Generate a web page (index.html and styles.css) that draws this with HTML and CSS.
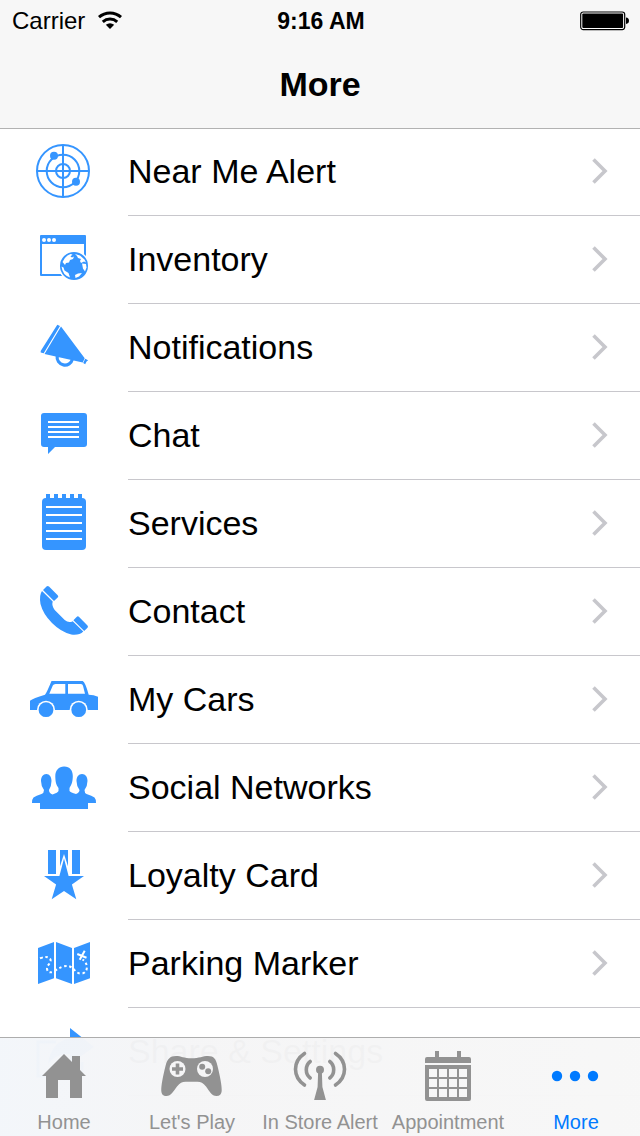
FILE: index.html
```html
<!DOCTYPE html>
<html lang="en">
<head>
<meta charset="utf-8">
<meta name="viewport" content="width=device-width, initial-scale=1">
<title>More</title>
<link rel="stylesheet" href="styles.css">
</head>
<body>
<svg class="defs" aria-hidden="true">
  <symbol id="chevron" viewBox="0 0 20 32"><path d="M3.500 4.500L15 16 3.500 27.500" fill="none" stroke="#c7c7cc" stroke-width="3.600"/></symbol>
</svg>
<div class="app">
  <header class="header">
    <div class="status">
      <div class="status-left">
        <span>Carrier</span>
        <svg width="26" height="20" viewBox="0 0 26 20" aria-hidden="true">
          <g fill="none" stroke="#000" stroke-width="3"><path d="M2 6.200a16.500 16.500 0 0 1 22 0"/><path d="M5.800 10.800a10.800 10.800 0 0 1 14.400 0"/></g>
          <path d="M8.800 13.800a6.800 6.800 0 0 1 8.400 0L13 18z"/>
        </svg>
      </div>
      <time class="status-time">9:16 AM</time>
      <svg class="battery" width="50" height="20" viewBox="0 0 50 20" aria-label="Battery full">
        <rect x=".7" y="1" width="44" height="17.600" rx="2.500" fill="#fff" stroke="#000" stroke-width="1.200"/>
        <rect x="2.300" y="2.600" width="40.800" height="14.400" rx="1"/>
        <path d="M46 6.600q3 .4 3 3.200t-3 3.200z"/>
      </svg>
    </div>
    <h1 class="title">More</h1>
  </header>

  <main class="list">
    <a class="row" href="#near-me">
      <svg class="icon" viewBox="0 0 72 88" aria-hidden="true">
        <g fill="none" stroke="currentColor" stroke-width="2"><circle cx="35" cy="43" r="26"/><circle cx="35" cy="43" r="16.300"/><circle cx="35" cy="43" r="7"/><path d="M35 17v52M9 43h52"/></g>
        <circle cx="26" cy="27.700" r="4"/><circle cx="48" cy="53.800" r="4"/>
      </svg>
      <span class="body"><span class="label">Near Me Alert</span><svg class="chevron"><use href="#chevron"/></svg></span>
    </a>
    <a class="row" href="#inventory">
      <svg class="icon" viewBox="0 0 72 88" aria-hidden="true">
        <path fill-rule="evenodd" d="M13 19h44a1 1 0 0 1 1 1v39a1 1 0 0 1-1 1H13a1 1 0 0 1-1-1V20a1 1 0 0 1 1-1zM14 28v30h42V28z"/>
        <g fill="#fff"><circle cx="16" cy="24" r="2"/><circle cx="21" cy="24" r="2"/><circle cx="26" cy="24" r="2"/><circle cx="46" cy="50" r="15.500"/></g>
        <circle cx="46" cy="50" r="14"/>
        <g fill="#fff"><path d="M34.500 46q1.500-4 5-6.500l3-1.500 2 .5-2 2 1.500 1 2-1-1 2.500-3 1-1 2.500-3 .5-1 2z"/><path d="M47 38l5 1.500 4.500 4 1.500 3-2-1-3 1.500-1-2 1-2-3-1-1-2z"/><path d="M54 47.500l4 .5.500 3.500-1.500 4-2-3z"/><path d="M33.500 50.500l2 1 1 3 4 2.500 1.500 4.500q-7.500-2.500-8.500-11z"/><path d="M47 59l3-1.500 4-.5-3 3.500-3.500 1.500z"/></g>
      </svg>
      <span class="body"><span class="label">Inventory</span><svg class="chevron"><use href="#chevron"/></svg></span>
    </a>
    <a class="row" href="#notifications">
      <svg class="icon" viewBox="0 0 72 88" aria-hidden="true">
        <path d="M29.300 20.700L32 22 15.700 49.300 12.700 48.500V47zM33 22.600L56.700 54.200l-2 4.400-38.200-8.700zM57.200 54.800l2.900 1.500-1.700 1.500-1.200 2.500-2-1.200z"/>
        <path d="M29.200 52a7.800 7.800 0 0 0 15.300 3" fill="none" stroke="currentColor" stroke-width="3.200"/>
      </svg>
      <span class="body"><span class="label">Notifications</span><svg class="chevron"><use href="#chevron"/></svg></span>
    </a>
    <a class="row" href="#chat">
      <svg class="icon" viewBox="0 0 72 88" aria-hidden="true">
        <path d="M16 21h40a3 3 0 0 1 3 3v28a3 3 0 0 1-3 3H27l-7 7v-7h-4a3 3 0 0 1-3-3V24a3 3 0 0 1 3-3z"/>
        <path d="M20 30h31M20 35h31M20 40h31M20 45h31" stroke="#fff" stroke-width="2"/>
      </svg>
      <span class="body"><span class="label">Chat</span><svg class="chevron"><use href="#chevron"/></svg></span>
    </a>
    <a class="row" href="#services">
      <svg class="icon" viewBox="0 0 72 88" aria-hidden="true">
        <rect x="14" y="18" width="44" height="52" rx="4"/>
        <path d="M18 14h4v5h-4zM26 14h4v5h-4zM34 14h4v5h-4zM42 14h4v5h-4zM50 14h4v5h-4z"/>
        <path d="M18 27h36M18 35h36M18 43h36M18 51h36M18 59h36" stroke="#fff" stroke-width="2"/>
      </svg>
      <span class="body"><span class="label">Services</span><svg class="chevron"><use href="#chevron"/></svg></span>
    </a>
    <a class="row" href="#contact">
      <svg class="icon" viewBox="0 0 72 88" aria-hidden="true">
        <path d="M14 23l10.700 10.500q-1.200 4 2 8.500l10 10q4 3.500 8 1.200L55.300 63.500q-4 4-12 3Q33 64 24 55T12.500 36q-1.500-9 1.500-13z"/>
        <path d="M15 22l3.500-3.500q1.200-1 2.500 0l8.700 8.700q1.200 1.200 0 2.400L26 33zM45.400 52.200l3.200-3.300q1.300-1.200 2.500 0l8.400 8.600q1 1.200 0 2.300L56.200 63z"/>
      </svg>
      <span class="body"><span class="label">Contact</span><svg class="chevron"><use href="#chevron"/></svg></span>
    </a>
    <a class="row" href="#cars">
      <svg class="icon" viewBox="0 0 72 88" aria-hidden="true">
        <path fill-rule="evenodd" d="M2 54V44.700q3-2.400 15-6 1.500-1.500 6.500-13.700h31.200q2.500 1 6 13.700 5 0 9.300 2V54zM21.300 37.700h16V28H27.500q-2 0-2.700 1.500zM40 37.700h17l-2-8q-.5-1.700-2-1.700H40z"/>
        <g fill="#fff"><circle cx="18" cy="53.700" r="9"/><circle cx="50.700" cy="53.700" r="9"/></g>
        <circle cx="18" cy="53.700" r="7.400"/><circle cx="50.700" cy="53.700" r="7.400"/>
      </svg>
      <span class="body"><span class="label">My Cars</span><svg class="chevron"><use href="#chevron"/></svg></span>
    </a>
    <a class="row" href="#social">
      <svg class="icon" viewBox="0 0 72 88" aria-hidden="true">
        <path d="M36.300 22.500c5.500 0 8.500 4 8.500 9.500 0 6-1.500 9-3.300 12v3q1 1.500 6.500 3 3.500-1.500 3.500-4-3-4-3-9c0-4 2-7 5.500-7s5.500 3 5.500 7q0 5-3 9 0 3 2 4 5.500 1.500 8 3.500 1.500 1.500 1.500 5.500h-8v6H12v-6H4q0-4 1.500-5.500 2.500-2 8-3.500 2.500-1 2.500-4-3-4-3-9c0-4 2-7 5.300-7s5.200 3 5.200 7q0 5-2.500 9 0 3 3.500 4.500 5.500-2 6-3.500v-3c-2.200-3-3.200-6-3.200-12 0-5.500 3.500-9.500 8.700-9.500z"/>
      </svg>
      <span class="body"><span class="label">Social Networks</span><svg class="chevron"><use href="#chevron"/></svg></span>
    </a>
    <a class="row" href="#loyalty">
      <svg class="icon" viewBox="0 0 72 88" aria-hidden="true">
        <path d="M20 18h8v24h-8zM32 18h8v24h-8zM44 18h8v24h-8z"/>
        <path d="M36 22l6.500 20h-13z" fill="#fff"/>
        <path d="M36 26.500l4.600 17.500H56L43.900 52.500 48.300 67.300 36 59 23.700 67.300l4.400-14.800L16 44h15.400z"/>
      </svg>
      <span class="body"><span class="label">Loyalty Card</span><svg class="chevron"><use href="#chevron"/></svg></span>
    </a>
    <a class="row" href="#parking">
      <svg class="icon" viewBox="0 0 72 88" aria-hidden="true">
        <path d="M10 28l16-6v36.300L10 64zM28 22l16 6v36l-16-5.700zM46 28l16-6v36.300L46 64z"/>
        <path d="M12 38.300q8-3.200 10.500 1.200c1 4-3.500 5-3.500 9.500q1 5 7 2.500 8-6 14-5.500c6 1 7 7.500 13.500 7.700 7-.7 7-10.700 1-14.200" fill="none" stroke="#fff" stroke-width="2" stroke-dasharray="2.600 2.600"/>
        <path d="M49.300 34l9.200 3.700M56.700 30.700l-5 9" stroke="#fff" stroke-width="2"/>
      </svg>
      <span class="body"><span class="label">Parking Marker</span><svg class="chevron"><use href="#chevron"/></svg></span>
    </a>
    <a class="row" href="#share">
      <svg class="icon" viewBox="0 0 72 88" aria-hidden="true">
        <path d="M42 20l24 19-24 17V46q-14-1-22 10 3-22 22-26z"/>
        <path d="M28 34H10v34h44V54" fill="none" stroke="currentColor" stroke-width="3"/>
      </svg>
      <span class="body"><span class="label">Share &amp; Settings</span></span>
    </a>
  </main>

  <nav class="tabs">
    <a class="tab" href="#home">
      <svg class="tab-icon" viewBox="0 0 72 68" aria-hidden="true"><path d="M36 16l8 8v-6h8v14l6 6h-4v22H42V42H30v18H18V38h-4z"/></svg>
      <span class="tab-label">Home</span>
    </a>
    <a class="tab" href="#play">
      <svg class="tab-icon" viewBox="0 0 72 68" aria-hidden="true">
        <path d="M20 18c5 0 8 2.300 15.500 2.300S47 18 52 18c6 0 8 3 9.500 10 2.500 10 4.500 20 4.200 25-.2 3-2 5-5.200 5-5 0-7-5-10.500-9.500-3-3.500-5-4.700-8.500-4.700h-12c-3.500 0-5.500 1.200-8.500 4.700C17.500 53 15 58 10.500 58 7 58 5.500 56 5.300 53c-.3-5 1.700-15 4.200-25C11.200 21 14 18 20 18z"/>
        <g fill="#f5f5f6"><circle cx="21.500" cy="31" r="8"/><circle cx="49" cy="31" r="8"/></g>
        <path d="M19.700 25.500h3.600v3.700H27v3.600h-3.700v3.700h-3.600v-3.700H16v-3.600h3.700z"/><circle cx="46.200" cy="28.800" r="3"/><circle cx="52.200" cy="33.200" r="3"/>
      </svg>
      <span class="tab-label">Let's Play</span>
    </a>
    <a class="tab" href="#store">
      <svg class="tab-icon" viewBox="0 0 72 68" aria-hidden="true">
        <circle cx="36" cy="31.700" r="4"/><path d="M34.200 32h3.600l.6 17 3.500 13H30.100l3.500-13z"/>
        <g fill="none" stroke="currentColor" stroke-width="3.600" stroke-linecap="round"><path d="M26.200 23.500c-5.200 4-5.200 12.500 0 16.500M45.800 23.500c5.200 4 5.200 12.500 0 16.500M20.500 15.500c-12 8-12 23.500 0 31.500M51.500 15.500c12 8 12 23.500 0 31.500"/></g>
      </svg>
      <span class="tab-label">In Store Alert</span>
    </a>
    <a class="tab" href="#appointment">
      <svg class="tab-icon" viewBox="0 0 72 68" aria-hidden="true">
        <path d="M13 25v-4q0-2 2-2h8v-6h4v6h18v-6h4v6h8q2 0 2 2v4z"/>
        <path fill-rule="evenodd" d="M13 27h46v34q0 2-2 2H15q-2 0-2-2zM17 31v8h8v-8zM27 31v8h8v-8zM37 31v8h8v-8zM47 31v8h8v-8zM17 41v8h8v-8zM27 41v8h8v-8zM37 41v8h8v-8zM47 41v8h8v-8zM17 51v8h8v-8zM27 51v8h8v-8zM37 51v8h8v-8zM47 51v8h8v-8z"/>
      </svg>
      <span class="tab-label">Appointment</span>
    </a>
    <a class="tab tab-active" href="#more" aria-current="page">
      <svg class="tab-icon" viewBox="0 0 72 68" aria-hidden="true"><circle cx="17" cy="38" r="5.200"/><circle cx="35" cy="38" r="5.200"/><circle cx="53" cy="38" r="5.200"/></svg>
      <span class="tab-label">More</span>
    </a>
  </nav>
</div>
</body>
</html>
```

FILE: styles.css
```css
* {
  box-sizing: border-box;
}

body {
  margin: 0;
  background: #fff;
  color: #000;
  font-family: "Liberation Sans", Arial, sans-serif;
}

a {
  color: inherit;
  text-decoration: none;
}

svg {
  display: block;
  fill: currentColor;
  flex: none;
}

.defs {
  position: absolute;
  width: 0;
  height: 0;
}

.app {
  position: relative;
  display: flex;
  flex-direction: column;
  height: 100vh;
  overflow: hidden;
}

.header {
  flex: none;
  background: #f7f7f7;
  border-bottom: 1px solid #b2b2b2;
}

.status {
  display: grid;
  grid-template-columns: 1fr auto 1fr;
  align-items: center;
  height: 40px;
  padding: 2px 10px 0 12px;
  font-size: 24px;
}

.status-left {
  display: flex;
  align-items: center;
  gap: 12px;
}

.status-time {
  font-weight: bold;
  font-size: 23px;
}

.battery {
  justify-self: end;
}

.title {
  margin: 0;
  height: 88px;
  font-size: 34px;
  line-height: 88px;
  text-align: center;
}

.list {
  flex: 1;
  min-height: 0;
  overflow-y: auto;
  scrollbar-width: none;
}

.row {
  display: flex;
  height: 88px;
  padding-left: 28px;
}

.row:first-child {
  margin-top: -1px;
}

.icon {
  width: 72px;
  height: 88px;
  color: #3595ff;
}

.body {
  flex: 1;
  display: flex;
  align-items: center;
  justify-content: space-between;
  margin-left: 28px;
  padding: 0 30px 2px 0;
  border-bottom: 1px solid #c8c7cc;
}

.label {
  font-size: 34px;
  line-height: 40px;
}

.chevron {
  width: 20px;
  height: 32px;
}

.tabs {
  position: absolute;
  left: 0;
  right: 0;
  bottom: 0;
  display: flex;
  border-top: 1px solid #adadad;
  background: linear-gradient(90deg, rgba(243, 246, 250, 0.98), rgba(245, 245, 246, 0.98) 30%, rgba(247, 247, 247, 0.98));
}

.tab {
  flex: 1;
  display: flex;
  flex-direction: column;
  align-items: center;
  color: #929292;
  font-size: 20px;
  line-height: 28px;
  white-space: nowrap;
}

.tab-icon {
  width: 72px;
  height: 68px;
}

.tab-label {
  padding-top: 2px;
}

.tab-active {
  color: #007aff;
}
```
